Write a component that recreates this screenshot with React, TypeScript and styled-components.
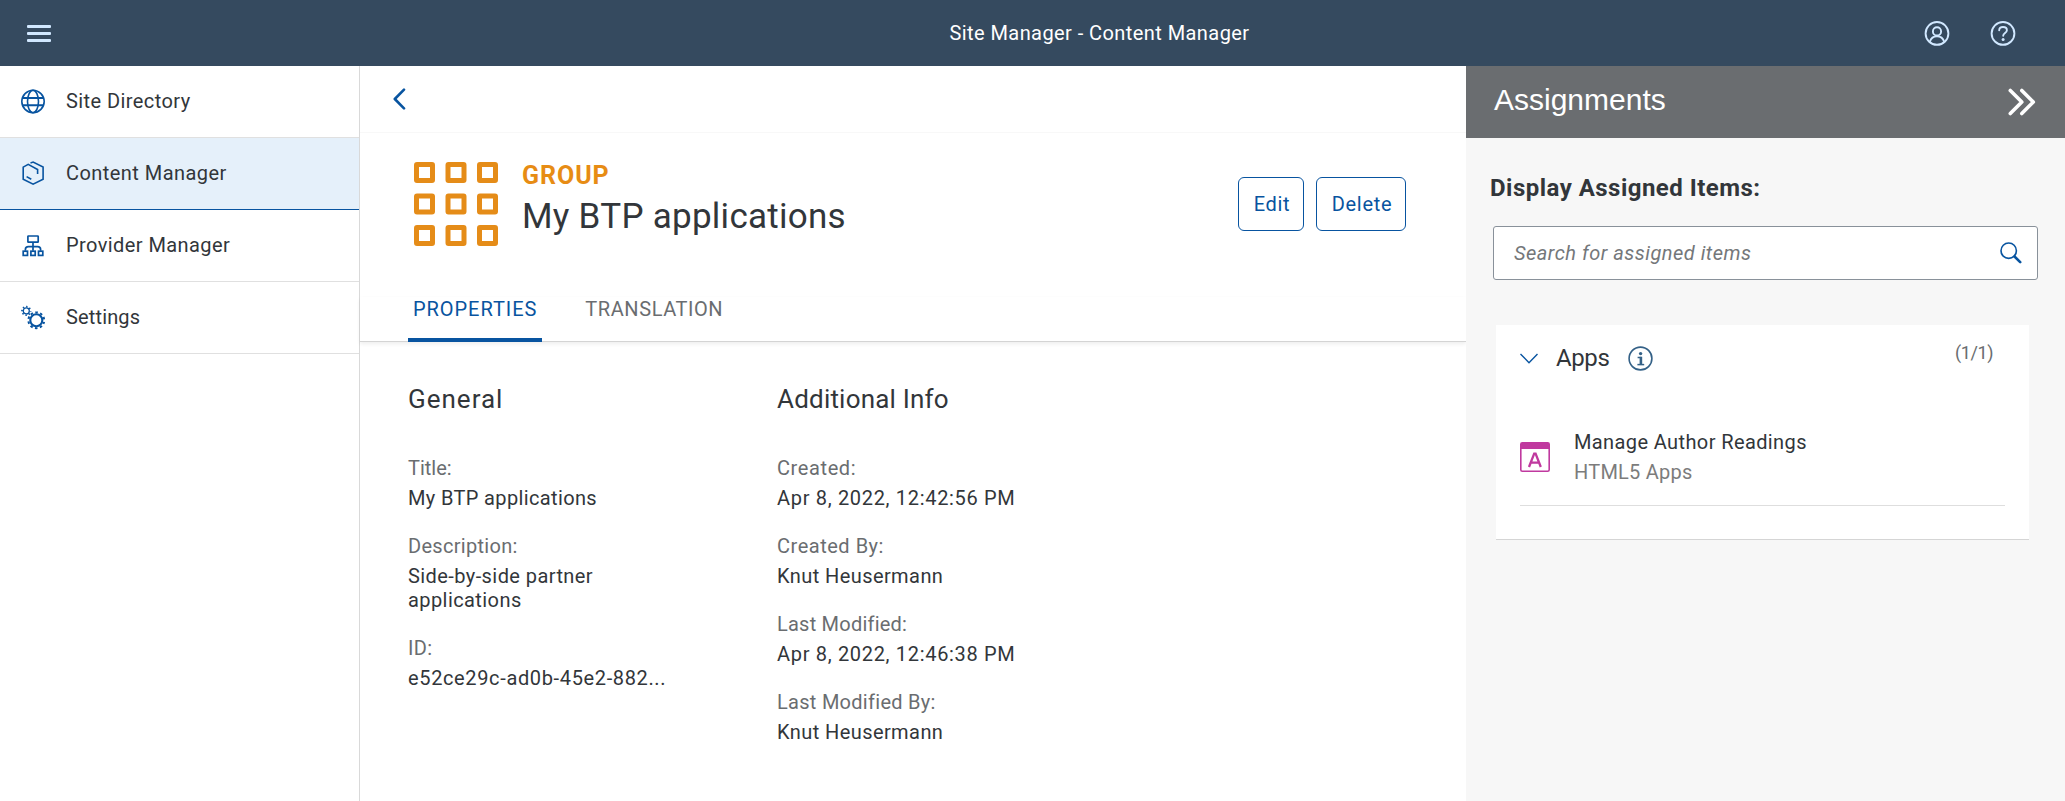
import React from 'react';
import styled, { createGlobalStyle } from 'styled-components';

const blue = '#0854a0';
const ink = '#32363a';
const muted = '#6a6d70';

const GlobalStyle = createGlobalStyle`
  * { box-sizing: border-box; }
  body {
    margin: 0;
    background: #fff;
    color: ${ink};
    font: 20px/24px Roboto, "Liberation Sans", sans-serif;
    overflow: hidden;
  }
  svg { display: block; flex: none; }
`;

const Page = styled.div`
  display: flex;
  flex-direction: column;
  height: 801px;
`;

const Text = styled.span<{ $track?: number }>`
  letter-spacing: ${(p) => p.$track ?? 0}px;
  white-space: nowrap;
`;

/* Shell bar */
const ShellBar = styled.header`
  display: grid;
  grid-template-columns: 1fr auto 1fr;
  align-items: center;
  height: 66px;
  padding: 0 49px 0 27px;
  background: #354a5f;
  color: #fff;
`;
const ShellTitle = styled(Text)`
  margin-left: 156px;
`;
const ShellActions = styled.div`
  display: flex;
  justify-content: flex-end;
  gap: 40px;
`;

const Columns = styled.div`
  display: flex;
  flex: 1;
  min-height: 0;
`;

/* Side navigation */
const SideNav = styled.nav`
  width: 360px;
  flex: none;
  border-right: 1px solid #d9d9d9;
`;
const NavItem = styled.div<{ $active?: boolean }>`
  display: flex;
  align-items: center;
  gap: 21px;
  height: 72px;
  padding-left: 21px;
  background: ${(p) => (p.$active ? '#e5f0fa' : '#fff')};
  border-bottom: 1px solid ${(p) => (p.$active ? blue : '#e0e0e0')};
`;
const NavLabel = styled(Text)`
  margin-top: -1px;
`;

/* Main content */
const Main = styled.main`
  flex: 1;
  display: flex;
  flex-direction: column;
`;
const BackBar = styled.div`
  display: flex;
  align-items: center;
  height: 67px;
  padding-left: 33px;
  border-bottom: 1px solid #f8f8f8;
`;
const ObjectHeader = styled.section`
  display: flex;
  height: 164px;
  padding: 0 60px 0 54px;
`;
const ObjectIcon = styled.div`
  margin-top: 29px;
`;
const ObjectTitles = styled.div`
  display: flex;
  flex-direction: column;
  gap: 5px;
  flex: 1;
  padding: 28px 0 0 23px;
`;
const ObjectKind = styled(Text)`
  font-size: 25px;
  font-weight: 700;
  line-height: 30px;
  color: #e78c14;
`;
const ObjectName = styled(Text)`
  font-size: 35px;
  line-height: 42px;
`;
const Actions = styled.div`
  display: flex;
  gap: 12px;
  margin-top: 44px;
`;
const Button = styled.button<{ $width: number }>`
  width: ${(p) => p.$width}px;
  height: 54px;
  padding: 0 0 0 2px;
  border: 1px solid ${blue};
  border-radius: 6px;
  background: #fff;
  color: ${blue};
  font: inherit;
`;
const Tabs = styled.div`
  display: flex;
  gap: 38px;
  height: 45px;
  padding-left: 48px;
  border-bottom: 1px solid #d4d4d4;
  box-shadow: 0 2px 4px rgba(0, 0, 0, 0.07);
`;
const Tab = styled.div<{ $active?: boolean }>`
  height: 45px;
  padding: 0 5px;
  color: ${(p) => (p.$active ? blue : muted)};
  background: ${(p) =>
    p.$active ? `linear-gradient(${blue}, ${blue}) bottom / 100% 4px no-repeat` : 'none'};
  border-radius: 2px 2px 0 0;
`;
const Details = styled.section`
  display: flex;
  gap: 107px;
  padding: 41px 0 0 48px;
`;
const DetailGroup = styled.div`
  width: 262px;
`;
const GroupTitle = styled.h2`
  margin: 0 0 41px;
  font-size: 26px;
  font-weight: 400;
  line-height: 32px;
`;
const Field = styled.div`
  margin-bottom: 24px;
`;
const Label = styled.div<{ $track?: number }>`
  margin-bottom: 6px;
  color: ${muted};
  letter-spacing: ${(p) => p.$track ?? 0}px;
`;
const Value = styled.div<{ $track?: number }>`
  letter-spacing: ${(p) => p.$track ?? 0}px;
`;

/* Assignments panel */
const Panel = styled.aside`
  width: 599px;
  flex: none;
  background: #f7f7f7;
`;
const PanelHeader = styled.div`
  display: flex;
  align-items: center;
  justify-content: space-between;
  height: 72px;
  padding: 0 29px 0 28px;
  background: ${muted};
  color: #fff;
  font: 30px/36px "Liberation Sans", Arial, sans-serif;
`;
const PanelTitle = styled(Text)`
  padding-bottom: 4px;
`;
const PanelBody = styled.div`
  padding: 35px 27px 0;
`;
const PanelLabel = styled.div`
  margin: 0 0 23px -3px;
  font-size: 24px;
  font-weight: 700;
  line-height: 30px;
  letter-spacing: 0.48px;
`;
const SearchBox = styled.div`
  display: flex;
  align-items: center;
  justify-content: space-between;
  height: 54px;
  padding: 0 15px 0 20px;
  border: 1px solid #89919a;
  border-radius: 3px;
  background: #fff;
  color: #74777a;
  font-style: italic;
`;
const Card = styled.section`
  height: 215px;
  margin: 45px 9px 0 3px;
  padding: 18px 24px 0;
  background: #fff;
  border-bottom: 1px solid #d5d5d5;
`;
const CardHeader = styled.div`
  display: flex;
  align-items: center;
  height: 30px;
`;
const CardTitle = styled(Text)`
  margin: 0 19px 0 18px;
  font-size: 24px;
  line-height: 30px;
`;
const Count = styled(Text)`
  margin: -11px 12px 0 auto;
  font-size: 18px;
  color: ${muted};
`;
const AssignedItem = styled.div`
  display: flex;
  align-items: flex-start;
  gap: 24px;
  height: 76px;
  margin-top: 57px;
  border-bottom: 1px solid #dedede;
`;
const ItemIcon = styled.div`
  padding-top: 12px;
`;
const ItemText = styled.div`
  display: flex;
  flex-direction: column;
  gap: 6px;
`;
const ItemKind = styled(Text)`
  color: #7c7c7c;
`;

const MenuIcon = () => (
  <svg width="24" height="17" fill="#d1e8ff">
    <rect width="24" height="3" rx="1" />
    <rect y="7" width="24" height="3" rx="1" />
    <rect y="14" width="24" height="3" rx="1" />
  </svg>
);
const UserIcon = () => (
  <svg width="26" height="26" fill="none" stroke="#d1e8ff" strokeWidth="1.9">
    <circle cx="13" cy="13.4" r="11.4" />
    <circle cx="13" cy="11.4" r="4.1" />
    <path d="M5.8 21.8C7 18 9.5 16.3 13 16.3s6 1.7 7.2 5.5" />
  </svg>
);
const HelpIcon = () => (
  <svg width="26" height="26" fill="none" stroke="#d1e8ff" strokeWidth="1.9" strokeLinecap="round">
    <circle cx="13" cy="13.4" r="11.4" />
    <path d="M9.2 10.2C9.3 8.2 10.8 7 13 7s3.9 1.2 3.9 3.2c0 2.900-3.700 2.800-3.700 5.600" />
    <circle cx="13.1" cy="19.5" r="1.5" fill="#d1e8ff" stroke="none" />
  </svg>
);
const GlobeIcon = () => (
  <svg width="24" height="25" fill="none" stroke={blue} strokeWidth="1.6">
    <circle cx="12" cy="12.5" r="11.2" />
    <ellipse cx="12" cy="12.5" rx="5.5" ry="11.2" />
    <path d="M1.2 9h21.6M1.2 16.2h21.6" strokeWidth="1.9" />
  </svg>
);
const ContentIcon = () => (
  <svg width="24" height="25" fill="none" stroke={blue} strokeWidth="1.6">
    <path d="M16.6 13V8.500L7.200 3.300 2.200 6.100v12.200l9.900 4.900 10-4.900V6.100L12.100 1l-2.600.9M5.600 15.600l4.700 2.700" />
  </svg>
);
const ProviderIcon = () => (
  <svg width="24" height="25" fill="none" stroke={blue} strokeWidth="1.7">
    <rect x="6.9" y="3" width="10.3" height="6.2" rx=".5" />
    <path d="M12 9.200v8.500M4.400 17.700v-1.200c0-2 1.200-2.900 3-2.900h9.200c1.800 0 3 .9 3 2.900v1.200" />
    <rect x="2.2" y="18.2" width="4.3" height="4.2" />
    <rect x="9.9" y="18.2" width="4.3" height="4.2" />
    <rect x="17.5" y="18.2" width="4.3" height="4.2" />
  </svg>
);
const SettingsIcon = () => (
  <svg width="24" height="25" fill="none" stroke={blue}>
    <circle cx="5.3" cy="5.9" r="3" strokeWidth="1.3" />
    <circle cx="5.3" cy="5.9" r="4.3" strokeWidth="1.7" strokeDasharray="1.4 1.977" strokeDashoffset=".7" />
    <circle cx="15.3" cy="15.3" r="6" strokeWidth="2.1" />
    <circle cx="15.3" cy="15.3" r="7.9" strokeWidth="2" strokeDasharray="2.5 2.464" strokeDashoffset="1.25" transform="rotate(18 15.3 15.3)" />
  </svg>
);
const BackIcon = () => (
  <svg width="13" height="22" fill="none" stroke={blue} strokeWidth="2.6" strokeLinecap="round" strokeLinejoin="round">
    <path d="M11 1.600 1.800 11l9.200 9.400" />
  </svg>
);
const GroupIcon = () => (
  <svg width="85" height="84" fill="none" stroke="#e58c18" strokeWidth="5">
    {[2.5, 34, 65.5].map((y) =>
      [2.5, 34, 65.5].map((x) => (
        <rect key={`${x}-${y}`} x={x} y={y} width="16" height="16" rx="0.5" />
      )),
    )}
  </svg>
);
const CollapseIcon = () => (
  <svg width="28" height="28" fill="none" stroke="#fff" strokeWidth="3.6" strokeLinecap="round" strokeLinejoin="round">
    <path d="M2.300 2.500 13.800 14 2.300 25.500M13.800 2.500 25.300 14 13.800 25.500" />
  </svg>
);
const SearchIcon = () => (
  <svg width="22" height="22" fill="none" stroke={blue}>
    <circle cx="8.7" cy="8.7" r="7.7" strokeWidth="1.6" />
    <path d="m14.500 14.500 5.700 5.700" strokeWidth="2.6" strokeLinecap="round" />
  </svg>
);
const ChevronDown = () => (
  <svg width="18" height="11" fill="none" stroke={blue} strokeWidth="1.4">
    <path d="m.5.9 8.500 8.800L17.500.9" />
  </svg>
);
const InfoIcon = () => (
  <svg width="25" height="25" fill="none" stroke="#346187">
    <circle cx="12.5" cy="12.5" r="11.4" strokeWidth="1.6" />
    <circle cx="12.6" cy="7.6" r="1.7" fill="#346187" stroke="none" />
    <path d="M9.600 11.500h3.200v7" strokeWidth="1.5" />
    <path d="M12.900 10.800v7.500" strokeWidth="2.6" />
    <path d="M9.400 18.600h6.800" strokeWidth="1.5" />
  </svg>
);
const AppIcon = () => (
  <svg width="30" height="30" fill="none" stroke="#c0399f">
    <rect x=".8" y=".8" width="28.4" height="28.4" rx="1.5" strokeWidth="1.6" />
    <path d="M1 1h28v6H1z" fill="#c0399f" stroke="none" />
    <path d="m9 25 5.200-13.300h1.400L20.800 25M11 20.700h7.800" strokeWidth="2.3" />
  </svg>
);

type FieldData = { label: string; lt: number; value: string; vt: number };

const general: FieldData[] = [
  { label: 'Title:', lt: 0, value: 'My BTP applications', vt: 0.36 },
  { label: 'Description:', lt: 0.3, value: 'Side-by-side partner applications', vt: 0.42 },
  { label: 'ID:', lt: 0.4, value: 'e52ce29c-ad0b-45e2-882...', vt: 0.64 },
];
const additional: FieldData[] = [
  { label: 'Created:', lt: 0.6, value: 'Apr 8, 2022, 12:42:56 PM', vt: 0.68 },
  { label: 'Created By:', lt: 0.52, value: 'Knut Heusermann', vt: 0.42 },
  { label: 'Last Modified:', lt: 0.22, value: 'Apr 8, 2022, 12:46:38 PM', vt: 0.68 },
  { label: 'Last Modified By:', lt: 0.28, value: 'Knut Heusermann', vt: 0.42 },
];

const Fields = ({ items }: { items: FieldData[] }) => (
  <>
    {items.map((f) => (
      <Field key={f.label}>
        <Label $track={f.lt}>{f.label}</Label>
        <Value $track={f.vt}>{f.value}</Value>
      </Field>
    ))}
  </>
);

export default function App() {
  return (
    <Page>
      <GlobalStyle />
      <ShellBar>
        <MenuIcon />
        <ShellTitle $track={0.43}>Site Manager - Content Manager</ShellTitle>
        <ShellActions>
          <UserIcon />
          <HelpIcon />
        </ShellActions>
      </ShellBar>
      <Columns>
        <SideNav>
          <NavItem>
            <GlobeIcon />
            <NavLabel $track={0.42}>Site Directory</NavLabel>
          </NavItem>
          <NavItem $active>
            <ContentIcon />
            <NavLabel $track={0.45}>Content Manager</NavLabel>
          </NavItem>
          <NavItem>
            <ProviderIcon />
            <NavLabel $track={0.42}>Provider Manager</NavLabel>
          </NavItem>
          <NavItem>
            <SettingsIcon />
            <NavLabel $track={0.15}>Settings</NavLabel>
          </NavItem>
        </SideNav>
        <Main>
          <BackBar>
            <BackIcon />
          </BackBar>
          <ObjectHeader>
            <ObjectIcon>
              <GroupIcon />
            </ObjectIcon>
            <ObjectTitles>
              <ObjectKind $track={0.95}>GROUP</ObjectKind>
              <ObjectName $track={0.27}>My BTP applications</ObjectName>
            </ObjectTitles>
            <Actions>
              <Button $width={66}>
                <Text $track={0.7}>Edit</Text>
              </Button>
              <Button $width={90}>
                <Text $track={0.7}>Delete</Text>
              </Button>
            </Actions>
          </ObjectHeader>
          <Tabs>
            <Tab $active>
              <Text $track={0.95}>PROPERTIES</Text>
            </Tab>
            <Tab>
              <Text $track={0.57}>TRANSLATION</Text>
            </Tab>
          </Tabs>
          <Details>
            <DetailGroup>
              <GroupTitle>
                <Text $track={1}>General</Text>
              </GroupTitle>
              <Fields items={general} />
            </DetailGroup>
            <DetailGroup>
              <GroupTitle>
                <Text $track={0.2}>Additional Info</Text>
              </GroupTitle>
              <Fields items={additional} />
            </DetailGroup>
          </Details>
        </Main>
        <Panel>
          <PanelHeader>
            <PanelTitle>Assignments</PanelTitle>
            <CollapseIcon />
          </PanelHeader>
          <PanelBody>
            <PanelLabel>Display Assigned Items:</PanelLabel>
            <SearchBox>
              <Text $track={0.49}>Search for assigned items</Text>
              <SearchIcon />
            </SearchBox>
            <Card>
              <CardHeader>
                <ChevronDown />
                <CardTitle $track={-0.4}>Apps</CardTitle>
                <InfoIcon />
                <Count $track={-0.4}>(1/1)</Count>
              </CardHeader>
              <AssignedItem>
                <ItemIcon>
                  <AppIcon />
                </ItemIcon>
                <ItemText>
                  <Text $track={0.39}>Manage Author Readings</Text>
                  <ItemKind $track={0.23}>HTML5 Apps</ItemKind>
                </ItemText>
              </AssignedItem>
            </Card>
          </PanelBody>
        </Panel>
      </Columns>
    </Page>
  );
}
